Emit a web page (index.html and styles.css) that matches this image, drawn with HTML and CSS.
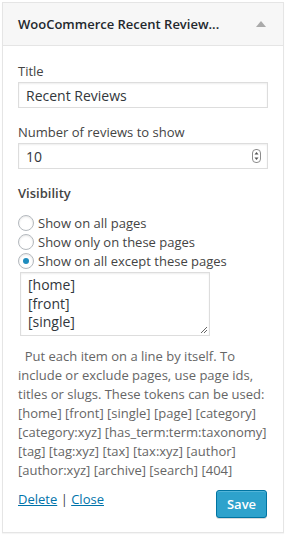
FILE: index.html
```html
<!DOCTYPE html>
<html>
<head>
<meta charset="utf-8">
<link rel="stylesheet" href="styles.css">
</head>
<body>
<div class="widget">
  <div class="widget-top">
    <h3 class="widget-title">WooCommerce Recent Review...</h3>
    <span class="toggle"></span>
  </div>
  <div class="widget-inside">
    <p class="field">
      <label class="lbl">Title</label>
      <span class="input">Recent Reviews</span>
    </p>
    <p class="field">
      <label class="lbl">Number of reviews to show</label>
      <span class="input number">10<span class="spin"><svg width="9" height="14" viewBox="0 0 9 14"><rect x="0.5" y="0.5" width="8" height="13" rx="3.5" fill="#fff" stroke="#8c8c8c"/><path d="M2.5 5.5 L4.5 3 L6.5 5.5 Z" fill="#555"/><path d="M2.5 8.5 L4.5 11 L6.5 8.5 Z" fill="#555"/></svg></span></span>
    </p>
    <div class="vis">
      <div class="vis-title">Visibility</div>
      <div class="radios">
        <div class="radio-row"><span class="radio"></span>Show on all pages</div>
        <div class="radio-row"><span class="radio"></span>Show only on these pages</div>
        <div class="radio-row"><span class="radio checked"></span>Show on all except these pages</div>
      </div>
      <div class="textarea">[home]<br>[front]<br>[single]<svg class="grip" width="8" height="8" viewBox="0 0 8 8"><path d="M7 1 L1 7 M7 4 L4 7" stroke="#666" stroke-width="1"/></svg></div>
      <p class="help">&nbsp; Put each item on a line by itself. To include or exclude pages, use page ids, titles or slugs. These tokens can be used: [home] [front] [single] [page] [category] [category:xyz] [has_term:term:taxonomy] [tag] [tag:xyz] [tax] [tax:xyz] [author] [author:xyz] [archive] [search] [404]</p>
    </div>
    <div class="actions">
      <div class="links"><a href="#">Delete</a> | <a href="#">Close</a></div>
      <span class="save">Save</span>
    </div>
  </div>
</div>
</body>
</html>
```
FILE: styles.css
```css
html, body { margin: 0; padding: 0; background: #fff; }
body {
  font-family: "Open Sans", "Liberation Sans", sans-serif;
  font-size: 13px;
  color: #444;
  padding: 2px 3px 3px 2px;
}
.widget {
  border: 1px solid #e5e5e5;
  background: #fff;
  box-shadow: 0 1px 1px rgba(0,0,0,0.04);
}
.widget-top {
  height: 42px;
  background: #f7f7f7;
  border-bottom: 1px solid #e5e5e5;
  display: flex;
  align-items: center;
  justify-content: space-between;
  padding: 0 17px 0 15px;
}
.widget-title {
  margin: 0;
  font-size: 13px;
  font-weight: 600;
  color: #23282d;
  line-height: 1;
  padding-top: 1px;
}
.toggle {
  width: 0; height: 0;
  border-left: 5px solid transparent;
  border-right: 5px solid transparent;
  border-bottom: 6px solid #aaa;
  margin-top: -1px;
}
.widget-inside {
  padding: 16px 15px 14px 15px;
}
.field { margin: 0 0 15px 0; }
.lbl { display: block; line-height: 18px; margin-bottom: 2px; }
.input {
  display: flex;
  align-items: center;
  box-sizing: border-box;
  height: 26px;
  border: 1px solid #ddd;
  box-shadow: inset 0 1px 2px rgba(0,0,0,0.07);
  padding: 0 6px 0 7px;
  font-size: 14px;
  color: #32373c;
  background: #fff;
}
.number { justify-content: space-between; }
.spin { display: flex; align-items: center; }
.spin svg { display: block; }
.vis { margin-top: 15px; }
.vis-title { font-weight: 600; color: #444; line-height: 18px; margin-bottom: 11px; }
.radios { display: flex; flex-direction: column; }
.radio-row { display: flex; align-items: center; height: 19px; color: #444; font-size: 13px; }
.radio {
  box-sizing: border-box;
  width: 16px; height: 16px;
  border-radius: 50%;
  border: 1px solid #b4b9be;
  background: #fff;
  box-shadow: inset 0 1px 2px rgba(0,0,0,0.1);
  margin-right: 4px;
  display: flex; align-items: center; justify-content: center;
}
.radio.checked::after {
  content: "";
  width: 6px; height: 6px; border-radius: 50%;
  background: #1e8cbe;
}
.textarea {
  position: relative;
  box-sizing: border-box;
  width: 190px;
  height: 64px;
  margin: 2px 0 0 2px;
  border: 1px solid #ddd;
  box-shadow: inset 0 1px 2px rgba(0,0,0,0.07);
  padding: 3px 7px;
  font-size: 14px;
  line-height: 18.5px;
  color: #32373c;
}
.grip { position: absolute; right: 1px; bottom: 1px; }
.help {
  margin: 11px 0 0 0;
  color: #666;
  font-size: 13px;
  line-height: 19px;
}
.actions {
  margin-top: 10px;
  display: flex;
  justify-content: space-between;
  align-items: flex-start;
}
.links { color: #444; font-size: 13px; line-height: 18px; }
.links a { color: #0073aa; text-decoration: underline; }
.save {
  box-sizing: border-box;
  height: 28px;
  width: 51px;
  display: flex;
  align-items: center;
  justify-content: center;
  background: #2ea2cc;
  border: 1px solid #0074a2;
  border-radius: 3px;
  box-shadow: inset 0 1px 0 rgba(120,200,230,0.5), 0 1px 0 rgba(0,0,0,0.15);
  color: #fff;
  font-size: 13px;
  font-weight: 600;
  margin-right: 1px;
}
```
